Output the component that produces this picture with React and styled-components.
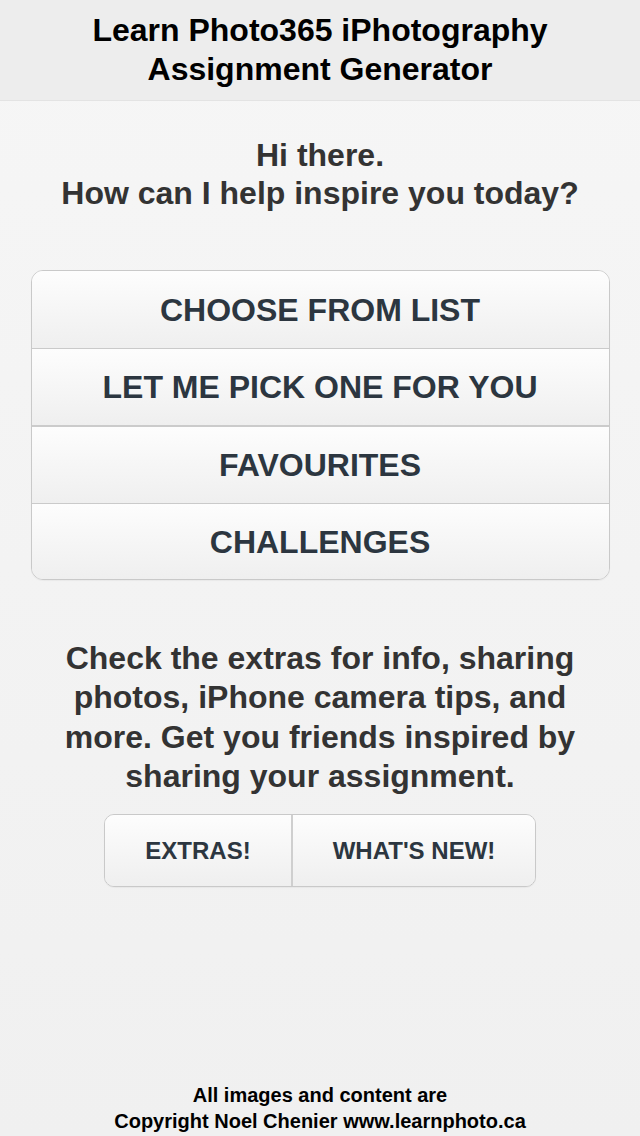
import React from "react";
import styled, { createGlobalStyle } from "styled-components";

const Global = createGlobalStyle`
  html, body { margin: 0; padding: 0; background: #f3f3f3; }
  body { font-family: "Liberation Sans", Arial, Helvetica, sans-serif; -webkit-font-smoothing: antialiased; }
  * { box-sizing: border-box; }
`;

const Page = styled.div`
  width: 640px;
  min-height: 1136px;
  display: flex;
  flex-direction: column;
  align-items: center;
  background: linear-gradient(#f6f6f6, #f0f0f0);
`;

const Header = styled.header`
  width: 100%;
  background: #ededed;
  border-bottom: 1px solid #e3e3e3;
  padding: 11px 0 11px;
  text-align: center;
  font-weight: bold;
  font-size: 32px;
  line-height: 39px;
  color: #000;
`;

const Greeting = styled.p`
  margin: 35px 0 0;
  text-align: center;
  font-weight: bold;
  font-size: 32px;
  line-height: 38px;
  color: #333333;
`;

const Menu = styled.nav`
  margin-top: 58px;
  width: 579px;
  border: 1px solid #c9c9c9;
  border-radius: 12px;
  overflow: hidden;
  display: flex;
  flex-direction: column;
  box-shadow: 0 1px 1px rgba(0, 0, 0, 0.04);
`;

const MenuRow = styled.div`
  box-sizing: content-box;
  height: ${(p) => p.$h}px;
  padding-top: 1px;
  display: flex;
  align-items: center;
  justify-content: center;
  background: linear-gradient(#fdfdfd, #efefef);
  border-bottom: ${(p) => p.$border};
  font-weight: bold;
  font-size: 32px;
  color: #2c3640;
`;

const Info = styled.p`
  margin: 59px 0 0;
  text-align: center;
  font-weight: bold;
  font-size: 32px;
  line-height: 39.3px;
  color: #333333;
`;

const ButtonGroup = styled.div`
  margin-top: 18px;
  display: flex;
  height: 73px;
  border: 1px solid #c9c9c9;
  border-radius: 10px;
  overflow: hidden;
  box-shadow: 0 1px 1px rgba(0, 0, 0, 0.04);
`;

const GroupButton = styled.div`
  width: ${(p) => p.$w}px;
  display: flex;
  align-items: center;
  justify-content: center;
  background: linear-gradient(#fdfdfd, #efefef);
  border-left: ${(p) => (p.$first ? "none" : "2px solid #cfcfcf")};
  font-weight: bold;
  font-size: 24px;
  color: #2c3640;
`;

const Footer = styled.footer`
  margin-top: auto;
  padding-bottom: 2px;
  text-align: center;
  font-weight: bold;
  font-size: 20px;
  line-height: 26px;
  color: #000;
`;

const items = [
  { t: "CHOOSE FROM LIST", h: 76, b: "1px solid #cacaca" },
  { t: "LET ME PICK ONE FOR YOU", h: 75, b: "2px solid #cbcbcb" },
  { t: "FAVOURITES", h: 75, b: "1px solid #cacaca" },
  { t: "CHALLENGES", h: 74, b: "none" },
];

export default function App() {
  return (
    <>
      <Global />
      <Page>
        <Header>
          Learn Photo365 iPhotography
          <br />
          Assignment Generator
        </Header>
        <Greeting>
          Hi there.
          <br />
          How can I help inspire you today?
        </Greeting>
        <Menu>
          {items.map((it) => (
            <MenuRow key={it.t} $h={it.h} $border={it.b}>
              {it.t}
            </MenuRow>
          ))}
        </Menu>
        <Info>
          Check the extras for info, sharing
          <br />
          photos, iPhone camera tips, and
          <br />
          more. Get you friends inspired by
          <br />
          sharing your assignment.
        </Info>
        <ButtonGroup>
          <GroupButton $first $w={186}>EXTRAS!</GroupButton>
          <GroupButton $w={244}>WHAT'S NEW!</GroupButton>
        </ButtonGroup>
        <Footer>
          All images and content are
          <br />
          Copyright Noel Chenier www.learnphoto.ca
        </Footer>
      </Page>
    </>
  );
}
